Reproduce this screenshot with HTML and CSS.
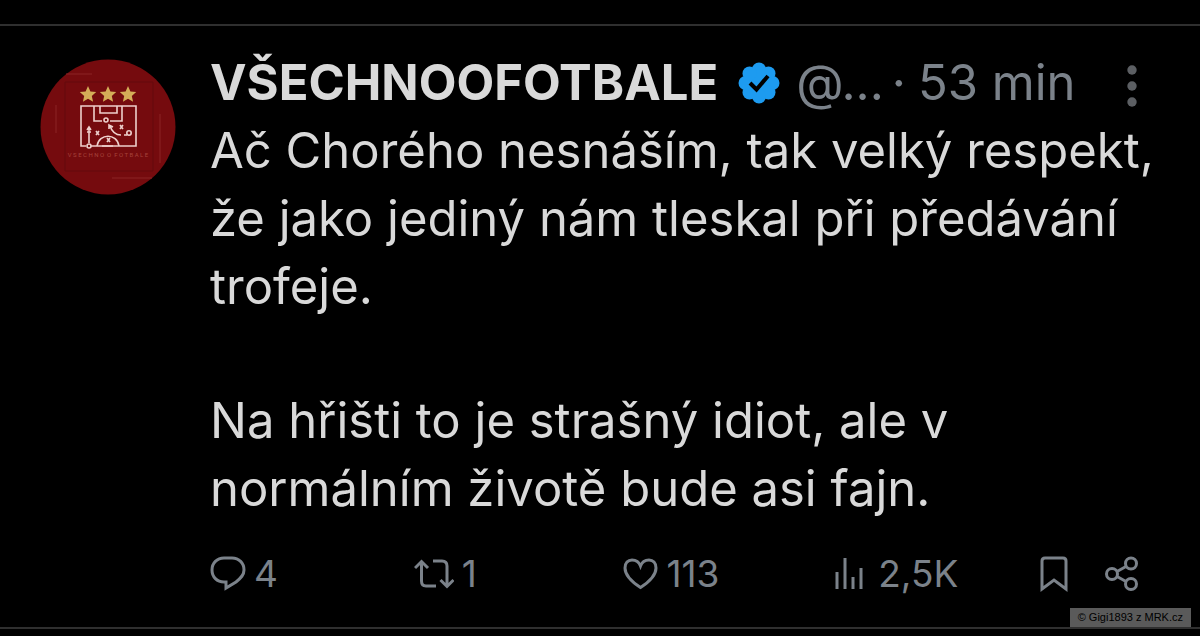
FILE: index.html
```html
<!DOCTYPE html>
<html lang="cs">
<head>
<meta charset="utf-8">
<meta name="viewport" content="width=device-width, initial-scale=1">
<title>VŠECHNOOFOTBALE</title>
<link rel="stylesheet" href="styles.css">
</head>
<body>
<article class="post">
  <svg class="avatar" viewBox="0 0 136 136" role="img" aria-label="VŠECHNOOFOTBALE">
    <circle cx="68" cy="68" r="67.5" fill="#750b0e"/>
    <g fill="none" stroke="#8c2425">
      <path d="M26 15H52M16 46V74M120 55V104M72 119H112"/>
      <path d="M25 23H113V112H25Z" stroke="#650a0c"/>
    </g>
    <g fill="#d5ad58">
      <path id="star" d="M48 27l2.4 5.4 5.8.6-4.4 3.900 1.300 5.900-5.100-3-5.100 3 1.300-5.900-4.400-3.900 5.800-.6z"/>
      <use href="#star" x="20"/>
      <use href="#star" x="40"/>
    </g>
    <g fill="none" stroke="#eed0cc" stroke-width="1.6">
      <path d="M46 87H41V47H96V87H51M54 47V62H62M70 62H82V47M60 47V54H77V47"/>
      <path d="M57 87C59 74 77 74 79 87M62 87H73M49 84V70M47 71l2-3 2 3M47 73h4M70 67C72 73 75 76 81 76M69 70l0-4 4 2M84 76h3"/>
      <circle cx="66" cy="61" r="2"/><circle cx="89" cy="74" r="2.2"/><circle cx="49" cy="87" r="2"/>
      <path d="M56 72l3 4M59 72l-3 4M80 66l3 4M83 66l-3 4M67 79l3 4M70 79l-3 4"/>
    </g>
    <text class="avatar-text" x="68" y="98" text-anchor="middle">V S E C H N O &#160;O &#160;F O T B A L E</text>
  </svg>
  <div class="content">
    <header class="head">
      <strong class="name">VŠECHNOOFOTBALE</strong>
      <svg class="badge" viewBox="0 0 42 42" role="img" aria-label="Ověřený účet">
        <g fill="#1d9bf0"><circle cx="21" cy="21" r="16"/><circle cx="21" cy="7.500" r="7"/><circle cx="30.500" cy="11.500" r="7"/><circle cx="34.500" cy="21" r="7"/><circle cx="30.500" cy="30.500" r="7"/><circle cx="21" cy="34.500" r="7"/><circle cx="11.500" cy="30.500" r="7"/><circle cx="7.500" cy="21" r="7"/><circle cx="11.500" cy="11.500" r="7"/></g>
        <path d="M12 21l6.500 6.500L30 14" fill="none" stroke="#000" stroke-width="4"/>
      </svg>
      <span class="handle">@...</span>
      <span class="dot">·</span>
      <time class="time">53 min</time>
      <button class="more" aria-label="Více">
        <svg viewBox="0 0 10 42"><g fill="#5c5f63"><circle cx="5" cy="5" r="4.700"/><circle cx="5" cy="21" r="4.700"/><circle cx="5" cy="37" r="4.700"/></g></svg>
      </button>
    </header>
    <p>Ač Chorého nesnáším, tak velký respekt, že jako jediný nám tleskal při předávání trofeje.</p>
    <p>Na hřišti to je strašný idiot, ale v normálním životě bude asi fajn.</p>
    <footer class="actions">
      <button class="action" aria-label="Odpovědi: 4">
        <svg class="icon" viewBox="0 0 36 36"><path d="M14 2H22C29 2 34 7 34 14C34 19 31 22 26 26L16 32V26H14C7 26 2 21 2 14S7 2 14 2Z"/></svg>
        <span>4</span>
      </button>
      <button class="action" aria-label="Přeposlání: 1">
        <svg class="icon wide" viewBox="0 0 40 36"><path d="M1 12L7.500 5.500L14 12M7.500 6V25Q7.500 30 12 30H22M19 5H28Q33 5 33 10V30M26.500 24L33 30.500L39.500 24"/></svg>
        <span>1</span>
      </button>
      <button class="action" aria-label="To se mi líbí: 113">
        <svg class="icon" viewBox="0 0 36 36"><path d="M17.500 31.500C9 26 2 20 2 12C2 7 5 4 9 4C13 4 16 6 17.500 10C19 6 22 4 26 4C30 4 33 7 33 12C33 20 26 26 17.500 31.500Z"/></svg>
        <span>113</span>
      </button>
      <button class="action" aria-label="Zobrazení: 2,5K">
        <svg class="icon" viewBox="0 0 36 36"><path d="M3 33V16M11 33V2M19 33V21M27 33V12"/></svg>
        <span>2,5K</span>
      </button>
      <div class="tools">
        <button class="action" aria-label="Uložit do záložek"><svg class="icon mark" viewBox="0 0 28 36"><path d="M2 33V5Q2 2 5 2H23Q26 2 26 5V33L14 24Z"/></svg></button>
        <button class="action" aria-label="Sdílet"><svg class="icon" viewBox="0 0 36 36"><circle cx="8" cy="18" r="5.500"/><circle cx="27" cy="7.500" r="5.500"/><circle cx="27" cy="28" r="5.500"/><path d="M13 15.500L22 10.500M13 20.500L22 25.500"/></svg></button>
      </div>
    </footer>
  </div>
</article>
<small class="credit">© Gigi1893 z MRK.cz</small>
</body>
</html>
```
FILE: styles.css
```css
* { box-sizing: border-box; }
body {
  margin: 0;
  padding-top: 24px;
  background: #000;
  color: #d9d9d9;
  font-family: Inter, "Open Sans", sans-serif;
  font-size: 49px;
  line-height: 68px;
}
.post {
  display: flex;
  gap: 34px;
  padding: 23px 40px 29px;
  border-top: 2px solid #2f2f2f;
  border-bottom: 2px solid #2f2f2f;
}
.avatar { flex: none; width: 136px; height: 136px; margin-top: 10px; }
.avatar-text { font-family: Roboto, sans-serif; font-size: 6px; fill: #a6433b; }
.content { flex: 1; min-width: 0; }
.head { display: flex; align-items: center; white-space: nowrap; }
.name { font-weight: 700; }
.badge { flex: none; width: 42px; height: 42px; margin-left: 20px; }
.handle, .dot, .time { color: #7b828a; }
.handle { margin-left: 16px; }
.dot { margin: 0 12px 0 8px; }
.more { display: flex; margin-top: 6px; margin-left: auto; margin-right: 23px; }
.more svg { width: 10px; height: 42px; }
button {
  padding: 0;
  border: 0;
  background: none;
  color: inherit;
  font: inherit;
  cursor: pointer;
}
p { margin: 0; }
p + p { margin-top: 66px; }
.actions {
  display: grid;
  grid-template-columns: 204fr 209fr 212fr 206fr auto;
  align-items: center;
  margin-top: 27px;
  margin-right: 20px;
  color: #7b828a;
  font-size: 37px;
  line-height: 48px;
}
.action { display: flex; align-items: center; gap: 8px; }
.icon {
  flex: none;
  width: 36px;
  height: 36px;
  fill: none;
  stroke: currentColor;
  stroke-width: 3;
}
.wide { width: 40px; }
.mark { width: 28px; }
.tools { display: flex; gap: 36px; }
.credit {
  position: absolute;
  right: 9px;
  bottom: 9px;
  padding: 0 8px;
  background: #5a5a5a;
  color: #000;
  font-family: "Liberation Sans", sans-serif;
  font-size: 11px;
  line-height: 19px;
}
```
